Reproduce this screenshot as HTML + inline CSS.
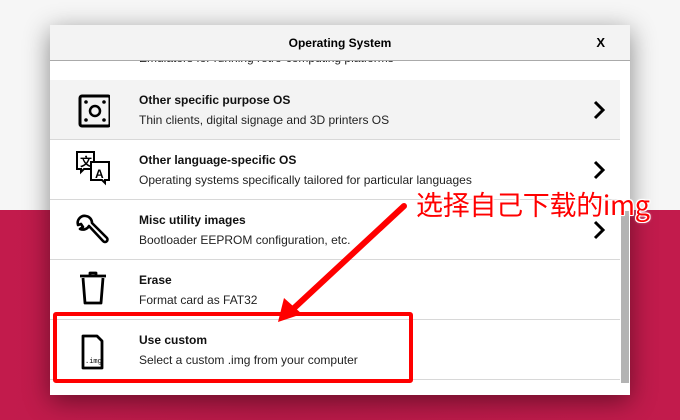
<!DOCTYPE html>
<html><head><style>
body{margin:0;width:680px;height:420px;overflow:hidden;position:relative;font-family:"Liberation Sans",sans-serif;background:#f6f6f6}
.bot{position:absolute;left:0;top:210px;width:680px;height:210px;background:linear-gradient(90deg,#c21b4c,#b81a48 40%,#c21b4c)}
.dlg{position:absolute;left:50px;top:25px;width:580px;height:370px;background:#fff;box-shadow:0 6px 24px rgba(0,0,0,.45);overflow:hidden}
.hdr{position:absolute;left:0;top:0;width:580px;height:35px;background:#f3f3f3;border-bottom:1px solid #aaa;font-weight:bold;font-size:12px;text-align:center;line-height:36px}
.x{position:absolute;right:25px;top:0;font-weight:bold;font-size:13px}
.row{position:absolute;left:0;width:570px;height:59px;border-bottom:1px solid #d8d8d8}
.t{position:absolute;left:89px;top:13px;font-weight:bold;font-size:12px;color:#111}
.d{position:absolute;left:89px;top:33px;font-size:12px;color:#222}
.ic{position:absolute;left:24px;top:12px}
.ch{position:absolute;left:542px;top:19px}
.sb{position:absolute;left:571px;top:36px;width:8px;height:320px;background:#fff}
.th{position:absolute;left:571px;top:186px;width:8px;height:172px;background:#b3b3b3}
.cn{position:absolute;left:416px;top:187px;font-size:27px;color:#f00;font-family:'Noto Sans CJK SC',sans-serif;line-height:34px;letter-spacing:-0.3px;text-shadow:1px 0 #fff,-1px 0 #fff,0 1px #fff,0 -1px #fff,1px 1px #fff,-1px -1px #fff,1px -1px #fff,-1px 1px #fff,0 0 3px #fff}
</style></head><body>
<div class="bot"></div>
<div class="dlg">
<div class="row" style="top:-4px;height:59px;border:none"><div class="d" style="top:30px">Emulators for running retro-computing platforms</div>
<svg class="ic" style="top:28px" width="40" height="10"><path d="M5 0v2a4 4 0 0 0 4 4h20a4 4 0 0 0 4-4V0" fill="none" stroke="#000" stroke-width="3"/></svg></div>
<div class="hdr">Operating System<span class="x">X</span></div>
<div class="row" style="top:55px;background:#f3f3f3">
<svg class="ic" width="36" height="36"><rect x="6" y="4" width="30" height="30" rx="2" fill="none" stroke="#000" stroke-width="3"/><circle cx="21" cy="19" r="5" fill="none" stroke="#000" stroke-width="2.5"/><circle cx="12" cy="10" r="1.8"/><circle cx="30" cy="10" r="1.8"/><circle cx="12" cy="28" r="1.8"/><circle cx="30" cy="28" r="1.8"/></svg>
<div class="t">Other specific purpose OS</div><div class="d">Thin clients, digital signage and 3D printers OS</div>
<svg class="ch" width="14" height="22"><path d="M3 3l8 8-8 8" fill="none" stroke="#000" stroke-width="3"/></svg></div>
<div class="row" style="top:115px">
<svg class="ic" style="top:10px" width="40" height="40"><path d="M3 2h17v17H10l-3 3v-3H3z" fill="#fff" stroke="#000" stroke-width="2"/><text x="6" y="16" font-size="12" font-weight="bold" font-family="Noto Sans CJK SC,sans-serif">文</text><path d="M17 12h18v18h-4v3l-3-3H17z" fill="#fff" stroke="#000" stroke-width="2"/><text x="21" y="28" font-size="12" font-weight="bold">A</text></svg>
<div class="t">Other language-specific OS</div><div class="d">Operating systems specifically tailored for particular languages</div>
<svg class="ch" width="14" height="22"><path d="M3 3l8 8-8 8" fill="none" stroke="#000" stroke-width="3"/></svg></div>
<div class="row" style="top:175px">
<svg class="ic" width="40" height="40"><path d="M12 4a7 7 0 0 0-8 9l3-1 2 3-3 2a7 7 0 0 0 9-3l14 15a2 2 0 0 0 4-3L18 11a7 7 0 0 0-6-7z" fill="none" stroke="#000" stroke-width="2.6" stroke-linejoin="round"/></svg>
<div class="t">Misc utility images</div><div class="d">Bootloader EEPROM configuration, etc.</div>
<svg class="ch" width="14" height="22"><path d="M3 3l8 8-8 8" fill="none" stroke="#000" stroke-width="3"/></svg></div>
<div class="row" style="top:235px">
<svg class="ic" style="top:10px" width="40" height="40"><path d="M6 6h26M16 6V3h6v3M9 8l2 25h16l2-25" fill="none" stroke="#000" stroke-width="2.8" stroke-linejoin="round"/></svg>
<div class="t">Erase</div><div class="d">Format card as FAT32</div></div>
<div class="row" style="top:295px">
<svg class="ic" style="top:14px" width="40" height="40"><path d="M9 2h14l5 5v27H9z" fill="none" stroke="#000" stroke-width="2.8" stroke-linejoin="round"/><text x="11" y="29" font-size="7" font-family="Liberation Mono,monospace">.img</text></svg>
<div class="t">Use custom</div><div class="d">Select a custom .img from your computer</div></div>
<div class="sb"></div><div class="th"></div>
</div>
<div style="position:absolute;left:53px;top:312px;width:352px;height:63px;border:4px solid #f00;border-radius:3px"></div>
<svg style="position:absolute;left:0;top:0" width="680" height="420"><path d="M404 206L292 310" stroke="#f00" stroke-width="6" stroke-linecap="round"/><path d="M278 322l6-24 18 16z" fill="#f00"/></svg>
<div class="cn">选择自己下载的img</div>
</body></html>
